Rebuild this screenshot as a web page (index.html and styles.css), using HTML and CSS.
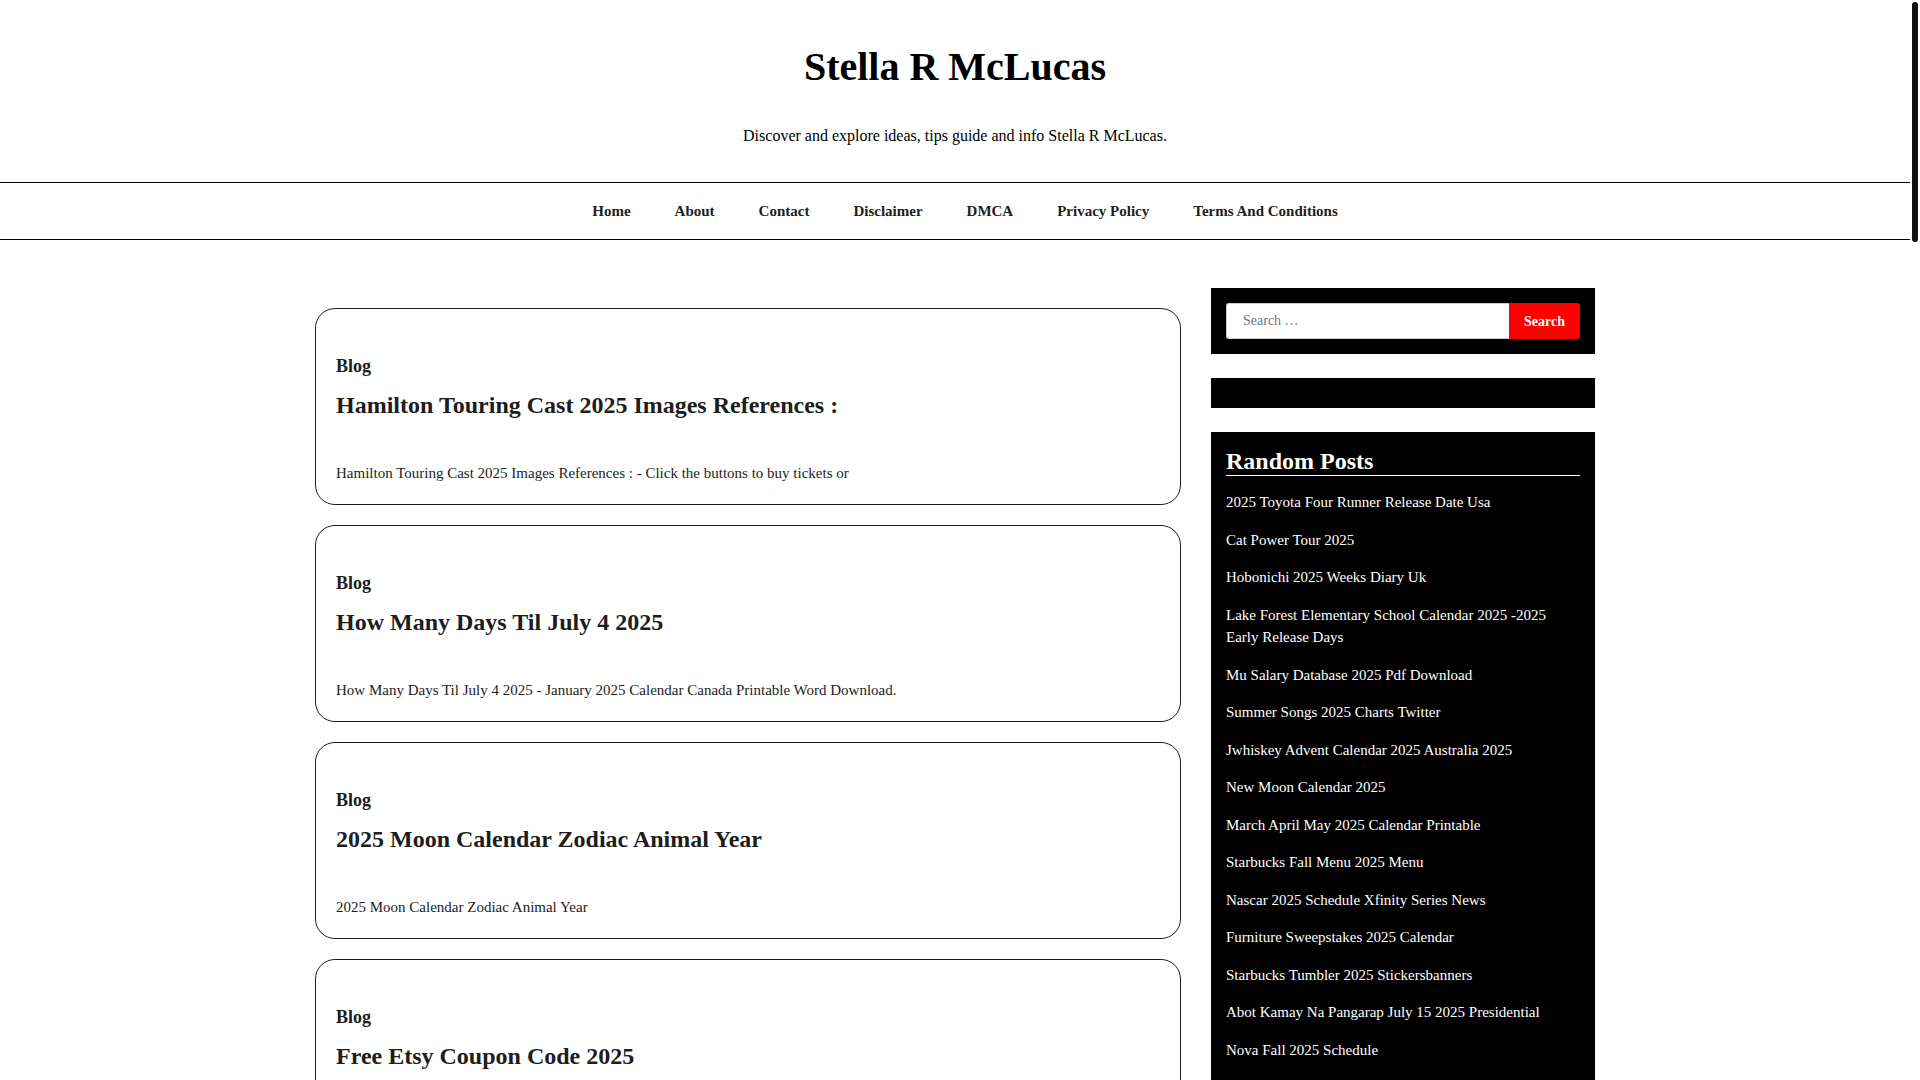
FILE: index.html
```html
<!DOCTYPE html>
<html lang="en">
<head>
    <meta charset="UTF-8">
    <meta name="viewport" content="width=device-width, initial-scale=1">
    <title>Stella R McLucas</title>
    <link rel="stylesheet" href="styles.css">
</head>
<body>
    <header class="site-header">
        <h1 class="site-title"><a href="#">Stella R McLucas</a></h1>
        <p class="site-description">Discover and explore ideas, tips guide and info Stella R McLucas.</p>
    </header>

    <nav class="main-nav">
        <ul class="menu">
            <li><a href="#">Home</a></li>
            <li><a href="#">About</a></li>
            <li><a href="#">Contact</a></li>
            <li><a href="#">Disclaimer</a></li>
            <li><a href="#">DMCA</a></li>
            <li><a href="#">Privacy Policy</a></li>
            <li><a href="#">Terms And Conditions</a></li>
        </ul>
    </nav>

    <div class="container">
        <main class="posts">
            <article class="post">
                <a class="category" href="#">Blog</a>
                <h2 class="post-title"><a href="#">Hamilton Touring Cast 2025 Images References :</a></h2>
                <p class="excerpt">Hamilton Touring Cast 2025 Images References : - Click the buttons to buy tickets or</p>
            </article>
            <article class="post">
                <a class="category" href="#">Blog</a>
                <h2 class="post-title"><a href="#">How Many Days Til July 4 2025</a></h2>
                <p class="excerpt">How Many Days Til July 4 2025 - January 2025 Calendar Canada Printable Word Download.</p>
            </article>
            <article class="post">
                <a class="category" href="#">Blog</a>
                <h2 class="post-title"><a href="#">2025 Moon Calendar Zodiac Animal Year</a></h2>
                <p class="excerpt">2025 Moon Calendar Zodiac Animal Year</p>
            </article>
            <article class="post">
                <a class="category" href="#">Blog</a>
                <h2 class="post-title"><a href="#">Free Etsy Coupon Code 2025</a></h2>
                <p class="excerpt">Free Etsy Coupon Code 2025</p>
            </article>
        </main>

        <aside class="sidebar">
            <section class="widget">
                <form class="search-form">
                    <input type="search" class="search-field" placeholder="Search …" aria-label="Search for">
                    <button type="submit" class="search-submit">Search</button>
                </form>
            </section>
            <section class="widget"></section>
            <section class="widget">
                <h2 class="widget-title">Random Posts</h2>
                <ul class="post-list">
                    <li><a href="#">2025 Toyota Four Runner Release Date Usa</a></li>
                    <li><a href="#">Cat Power Tour 2025</a></li>
                    <li><a href="#">Hobonichi 2025 Weeks Diary Uk</a></li>
                    <li><a href="#">Lake Forest Elementary School Calendar 2025 -2025 Early Release Days</a></li>
                    <li><a href="#">Mu Salary Database 2025 Pdf Download</a></li>
                    <li><a href="#">Summer Songs 2025 Charts Twitter</a></li>
                    <li><a href="#">Jwhiskey Advent Calendar 2025 Australia 2025</a></li>
                    <li><a href="#">New Moon Calendar 2025</a></li>
                    <li><a href="#">March April May 2025 Calendar Printable</a></li>
                    <li><a href="#">Starbucks Fall Menu 2025 Menu</a></li>
                    <li><a href="#">Nascar 2025 Schedule Xfinity Series News</a></li>
                    <li><a href="#">Furniture Sweepstakes 2025 Calendar</a></li>
                    <li><a href="#">Starbucks Tumbler 2025 Stickersbanners</a></li>
                    <li><a href="#">Abot Kamay Na Pangarap July 15 2025 Presidential</a></li>
                    <li><a href="#">Nova Fall 2025 Schedule</a></li>
                </ul>
            </section>
        </aside>
    </div>

    <div class="scroll-thumb"></div>
</body>
</html>
```
FILE: styles.css
```css
* {
    box-sizing: border-box;
}

body {
    margin: 0;
    padding-right: 10px;
    height: 100vh;
    overflow: hidden;
    background: #fff;
    color: #1d1d1d;
    font-family: "Liberation Serif", "Times New Roman", serif;
    font-size: 15px;
    line-height: 1.5;
}

a {
    color: inherit;
    text-decoration: none;
}

ul {
    margin: 0;
    padding: 0;
    list-style: none;
}

/* header */
.site-header {
    padding: 41px 20px 35px;
    color: #000;
    text-align: center;
}

.site-title {
    margin: 0 0 31px;
    font-size: 40px;
    line-height: 52px;
}

.site-description {
    margin: 0;
    font-size: 16px;
    line-height: 23px;
}

.main-nav {
    padding-left: 20px;
    border-top: 1px solid #000;
    border-bottom: 1px solid #000;
}

.menu {
    display: flex;
    flex-wrap: wrap;
    justify-content: center;
}

.menu a {
    display: block;
    padding: 17px 22px 16px;
    font-weight: bold;
    line-height: 23px;
}

/* layout */
.container {
    display: flex;
    gap: 30px;
    max-width: 1280px;
    margin: 48px auto 0;
}

.posts {
    flex: 1;
    display: flex;
    flex-direction: column;
    gap: 20px;
    padding-top: 20px;
}

.post {
    padding: 44px 20px 19px;
    border: 1px solid #1d1d1d;
    border-radius: 20px;
}

.category {
    display: block;
    font-size: 18px;
    font-weight: bold;
    line-height: 26px;
}

.post-title {
    margin: 6px 0 37px;
    font-size: 24px;
    line-height: 40px;
}

.excerpt {
    margin: 0;
    line-height: 23px;
}

/* sidebar */
.sidebar {
    width: 30%;
}

.widget {
    margin-bottom: 24px;
    padding: 15px;
    background: #000;
    color: #fff;
}

.search-form {
    display: flex;
}

.search-field {
    flex: 1;
    min-width: 0;
    height: 36px;
    padding: 0 16px;
    border: 1px solid #ccc;
    border-right: 0;
    border-radius: 3px 0 0 3px;
    background: #fff;
    font-family: inherit;
    font-size: 14px;
}

.search-submit {
    height: 36px;
    padding: 2px 15px 0;
    border: 0;
    border-radius: 0 3px 3px 0;
    background: #f00;
    color: #fff;
    font-family: inherit;
    font-size: 14px;
    font-weight: bold;
}

.widget-title {
    margin: 0 0 15px;
    border-bottom: 1px solid #fff;
    font-size: 24px;
    line-height: 28px;
}

.post-list li {
    margin-bottom: 15px;
}

/* page scroll indicator */
.scroll-thumb {
    position: fixed;
    top: 2px;
    right: 2px;
    width: 6px;
    height: 240px;
    border-radius: 3px;
    background: #111;
}
```
